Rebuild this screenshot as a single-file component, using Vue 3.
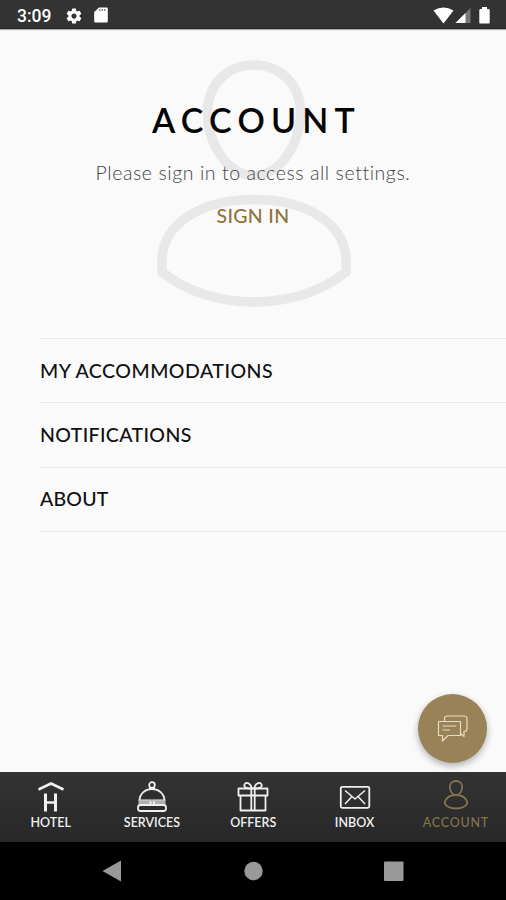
<template>
  <div class="screen">
    <header class="status">
      <span class="time">3:09</span>
      <svg class="gear" width="18" height="18" viewBox="0 0 24 24">
        <path
          fill="#fff"
          d="M19.43 12.98c.04-.32.07-.64.07-.98s-.03-.66-.07-.98l2.11-1.65c.19-.15.24-.42.12-.64l-2-3.46c-.12-.22-.39-.3-.61-.22l-2.49 1c-.52-.4-1.08-.73-1.69-.98l-.38-2.65C14.46 2.18 14.25 2 14 2h-4c-.25 0-.46.18-.49.42l-.38 2.65c-.61.25-1.17.59-1.69.98l-2.49-1c-.23-.09-.49 0-.61.22l-2 3.46c-.13.22-.07.49.12.64l2.11 1.65c-.04.32-.07.65-.07.98s.03.66.07.98l-2.11 1.65c-.19.15-.24.42-.12.64l2 3.46c.12.22.39.3.61.22l2.49-1c.52.4 1.08.73 1.69.98l.38 2.65c.03.24.24.42.49.42h4c.25 0 .46-.18.49-.42l.38-2.65c.61-.25 1.17-.59 1.69-.98l2.49 1c.23.09.49 0 .61-.22l2-3.46c.12-.22.07-.49-.12-.64l-2.11-1.65zM12 15.5c-1.93 0-3.5-1.57-3.5-3.5s1.57-3.5 3.5-3.5 3.5 1.57 3.5 3.5-1.57 3.5-3.5 3.5z"
        />
      </svg>
      <svg class="sd" width="14" height="17" viewBox="0 0 14 17">
        <path fill="#fff" d="M5 .5h7.500a1.300 1.300 0 0 1 1.300 1.300v12.400a1.300 1.300 0 0 1-1.300 1.300h-11A1.300 1.300 0 0 1 .2 14.200V5z" />
        <path stroke="#666" stroke-width="1.500" stroke-dasharray="1.500 1" d="M5 3h7" />
      </svg>
      <svg class="signals" width="60" height="20" viewBox="0 0 60 20">
        <path fill="#fff" d="M.5 4.500Q10.500-1.500 20.500 4.500L10.500 17.500z" />
        <path fill="#777" d="M37.500 2v15h-15z" />
        <path fill="#fff" d="M32.500 7v10h-10z" />
        <path fill="#fff" d="M49 1h5v2h1.500q1.200 0 1.200 1.200v12.200q0 1.200-1.200 1.200h-8q-1.200 0-1.200-1.200V4.200Q46.300 3 47.500 3H49z" />
      </svg>
    </header>

    <main class="content">
      <section class="hero">
        <svg class="person" width="196" height="250" viewBox="0 0 196 250" fill="none" stroke="#e8e8e8" stroke-width="9.500">
          <path d="M98 5C71 5 51.500 25 51.500 52C51.500 84 72 115.500 98 115.500S144.500 84 144.500 52C144.500 25 125 5 98 5z" />
          <path d="M6 212V201C6 166 42 139.500 98 139.500S190 166 190 201V212C165 232 132 242 98 242S31 232 6 212z" />
        </svg>
        <h1>ACCOUNT</h1>
        <p>Please sign in to access all settings.</p>
        <a class="signin">SIGN IN</a>
      </section>
      <ul class="menu">
        <li v-for="item in menu" :key="item.text"><span :class="item.cls">{{ item.text }}</span></li>
      </ul>
      <button class="chat">
        <svg width="32" height="28" viewBox="0 0 32 28" fill="none" stroke="#e6dabf" stroke-width="1.200" stroke-linejoin="round">
          <path d="M7.500 6.500V4q0-3 3-3H27q3 0 3 3v9.500q0 3-3 3v5l-3.500-3" />
          <path d="M1.500 6.500H23.500V20.500H11L5.500 26V20.500H1.500z" />
          <path d="M5.500 11H19M5.500 15H13" />
        </svg>
      </button>
    </main>

    <nav class="tabs">
      <div v-for="tab in tabs" :key="tab.name" class="tab" :class="[tab.name, { active: tab.name === 'account' }]">
        <svg width="34" height="34" viewBox="0 0 34 34" fill="none" stroke="currentColor" stroke-width="1.800" stroke-linejoin="round">
          <g v-if="tab.name === 'hotel'">
            <path stroke-width="2.500" d="M4.500 9.500L17 3.500l12.500 6" />
            <path stroke-width="3" d="M11.500 13.500v18M21.500 13.500v18" />
            <path stroke-width="2.500" d="M11.500 22.500h10" />
          </g>
          <g v-else-if="tab.name === 'services'">
            <circle cx="17" cy="5" r="2.800" />
            <path d="M14 8.500h6M4.500 20.500C4.500 14 10 9 17 9s12.500 5 12.500 11.500z" />
            <path stroke="#b0b0b0" stroke-width="4.500" d="M3.500 22.500h27" />
            <path stroke-width="2.500" d="M14.500 22.500h2M18 22.500h2" />
            <rect x="3" y="25" width="28" height="6" rx="2.500" />
          </g>
          <g v-else-if="tab.name === 'offers'">
            <path d="M2.500 8.500h29v7h-29zM4.500 15.500h25V30.500h-25zM15.300 8.500V30.500M18.700 8.500V30.500" />
            <path d="M16 8.500C10 8.500 7.500 7 8.500 4.500S14 2 16 8.500zM18 8.500C24 8.500 26.500 7 25.500 4.500S20 2 18 8.500z" />
          </g>
          <g v-else-if="tab.name === 'inbox'">
            <rect x="2.800" y="6.800" width="28.500" height="21" rx="1.500" />
            <path stroke-width="1.500" d="M7 10.500l10 8.500L27 10.500M7 24l6.500-7M27 24l-6.500-7" />
          </g>
          <g v-else>
            <path d="M17 1C13 1 10.800 3.800 10.800 7C10.800 11.500 13.500 15 17 15S23.200 11.500 23.200 7C23.200 3.800 21 1 17 1z" />
            <path d="M17 15C10 15 5.800 19 5.800 23.500C8 27.500 12 28.500 17 28.500S26 27.500 28.200 23.500C28.200 19 24 15 17 15z" />
          </g>
        </svg>
        <span>{{ tab.label }}</span>
      </div>
    </nav>

    <footer class="system">
      <svg width="506" height="58" viewBox="0 0 506 58" fill="#999">
        <path d="M102.500 29L121 18.500v21z" />
        <circle cx="253.500" cy="29" r="9.200" />
        <rect x="384" y="19.500" width="19.500" height="19.500" rx="1" />
      </svg>
    </footer>
  </div>
</template>

<script setup>
const menu = [
  { text: "MY ACCOMMODATIONS", cls: "accommodations" },
  { text: "NOTIFICATIONS", cls: "notifications" },
  { text: "ABOUT", cls: "about" },
];
const tabs = [
  { name: "hotel", label: "HOTEL" },
  { name: "services", label: "SERVICES" },
  { name: "offers", label: "OFFERS" },
  { name: "inbox", label: "INBOX" },
  { name: "account", label: "ACCOUNT" },
];
</script>

<style>
body {
  background: #fafafa;
}
</style>

<style scoped>
.screen {
  width: 506px;
  height: 900px;
  display: flex;
  flex-direction: column;
  overflow: hidden;
  background: #fafafa;
  font-family: Lato, "Liberation Sans", sans-serif;
}

.status {
  height: 29px;
  box-sizing: border-box;
  display: flex;
  align-items: center;
  padding: 3px 13px 0 17px;
  background: #333;
  border-bottom: 1px solid #2a2a2a;
  box-shadow: 0 1px 1px #aaa;
}

.time {
  width: 48px;
  color: #fff;
  font: 500 17.5px Roboto, sans-serif;
}

.sd {
  margin-left: 11px;
}

.signals {
  margin-left: auto;
}

.content {
  flex: 1;
  position: relative;
}

.hero {
  height: 309px;
  display: flex;
  flex-direction: column;
  align-items: center;
  position: relative;
  white-space: nowrap;
}

.person {
  position: absolute;
  top: 31px;
  left: 156px;
}

.hero h1,
.hero p,
.signin {
  position: relative;
}

h1 {
  margin: 70px 0 0 7px;
  font-size: 34px;
  line-height: 42px;
  font-weight: 600;
  letter-spacing: 6.2px;
  color: #050505;
}

.hero p {
  margin: 20px 0 0;
  font-size: 19.5px;
  line-height: 24px;
  font-weight: 300;
  letter-spacing: 0.57px;
  color: #444;
}

.signin {
  margin-top: 19px;
  font-size: 19.5px;
  line-height: 24px;
  font-weight: 500;
  letter-spacing: 0.3px;
  color: #8e733b;
}

.menu {
  list-style: none;
  margin: 0 0 0 40px;
  padding: 0;
  border-top: 1px solid #e8e8e8;
}

.menu li {
  height: 64.3px;
  box-sizing: border-box;
  display: flex;
  align-items: center;
  padding-bottom: 1px;
  border-bottom: 1px solid #e8e8e8;
  font-size: 19.5px;
  font-weight: 500;
  color: #111;
}

.accommodations {
  letter-spacing: 0.5px;
}

.notifications {
  letter-spacing: 0.37px;
}

.about {
  letter-spacing: 0.2px;
}

.chat {
  position: absolute;
  right: 19px;
  bottom: 9px;
  width: 69px;
  height: 69px;
  padding: 0;
  display: flex;
  align-items: center;
  justify-content: center;
  border: 0;
  border-radius: 50%;
  background: #9a8258;
  box-shadow: 0 3px 7px rgba(0, 0, 0, 0.3);
}

.tabs {
  height: 70px;
  display: grid;
  grid-template-columns: repeat(5, 101.3px);
  background: linear-gradient(#333, #282828);
}

.tab {
  display: flex;
  flex-direction: column;
  align-items: center;
  padding-top: 8px;
  color: #f0f0f0;
  font-size: 12.5px;
  line-height: 16px;
  font-weight: 600;
}

.tab span {
  margin-top: 1px;
}

.tab.active {
  color: #84734f;
  font-weight: 500;
}

.active span {
  letter-spacing: 0.75px;
}

.system {
  height: 58px;
  background: #000;
}

.system svg {
  display: block;
}
</style>
